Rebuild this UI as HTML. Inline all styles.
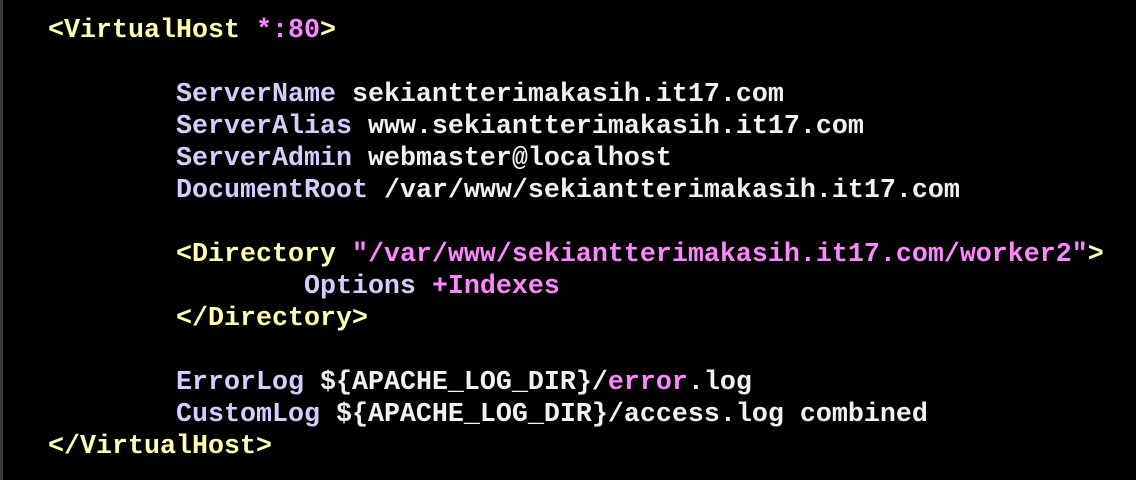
<!DOCTYPE html>
<html><head><meta charset="utf-8"><style>
html,body{margin:0;padding:0;background:#000;width:1136px;height:480px;overflow:hidden}
body{position:relative}
.bar{position:absolute;left:0;top:0;width:3px;height:480px;background:#3a3a3a}
pre{position:absolute;left:48px;top:15px;margin:0;font-family:"Liberation Mono",monospace;font-weight:bold;font-size:26.67px;line-height:32px;color:#f2f2f2;white-space:pre}
.y{color:#ffffaf}.p{color:#ff87ff}.l{color:#d0d0ff}
</style></head><body><div class="bar"></div><pre><span class="y">&lt;VirtualHost </span><span class="p">*:80</span><span class="y">&gt;</span>

        <span class="l">ServerName</span> sekiantterimakasih.it17.com
        <span class="l">ServerAlias</span> www.sekiantterimakasih.it17.com
        <span class="l">ServerAdmin</span> webmaster@localhost
        <span class="l">DocumentRoot</span> /var/www/sekiantterimakasih.it17.com

        <span class="y">&lt;Directory </span><span class="p">"/var/www/sekiantterimakasih.it17.com/worker2"</span><span class="y">&gt;</span>
                <span class="l">Options</span> <span class="p">+Indexes</span>
        <span class="y">&lt;/Directory&gt;</span>

        <span class="l">ErrorLog</span> ${APACHE_LOG_DIR}/<span class="p">error</span>.log
        <span class="l">CustomLog</span> ${APACHE_LOG_DIR}/access.log combined
<span class="y">&lt;/VirtualHost&gt;</span></pre></body></html>
